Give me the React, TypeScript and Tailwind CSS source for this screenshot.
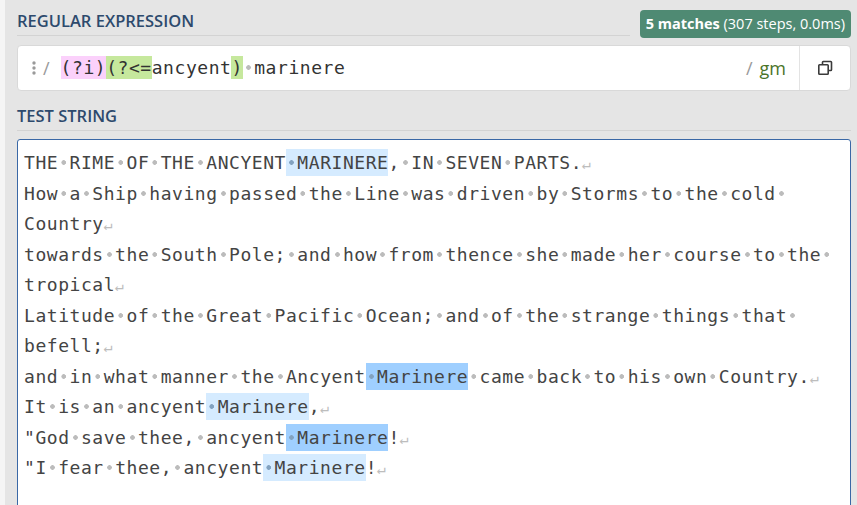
import React from "react";

type Seg = { t: string; h?: "l" | "d" };
type Line = { segs: Seg[]; nl: boolean };

const lines: Line[] = [
  { segs: [{ t: "THE RIME OF THE ANCYENT" }, { t: " MARINERE", h: "l" }, { t: ", IN SEVEN PARTS." }], nl: true },
  { segs: [{ t: "How a Ship having passed the Line was driven by Storms to the cold " }], nl: false },
  { segs: [{ t: "Country" }], nl: true },
  { segs: [{ t: "towards the South Pole; and how from thence she made her course to the " }], nl: false },
  { segs: [{ t: "tropical" }], nl: true },
  { segs: [{ t: "Latitude of the Great Pacific Ocean; and of the strange things that " }], nl: false },
  { segs: [{ t: "befell;" }], nl: true },
  { segs: [{ t: "and in what manner the Ancyent" }, { t: " Marinere", h: "d" }, { t: " came back to his own Country." }], nl: true },
  { segs: [{ t: "It is an ancyent" }, { t: " Marinere", h: "l" }, { t: "," }], nl: true },
  { segs: [{ t: "\"God save thee, ancyent" }, { t: " Marinere", h: "d" }, { t: "!" }], nl: true },
  { segs: [{ t: "\"I fear thee, ancyent" }, { t: " Marinere", h: "l" }, { t: "!" }], nl: true },
];

const DOT = "bg-[radial-gradient(circle,#bcbcbc_2px,transparent_2.6px)] bg-no-repeat bg-center";
const DOT_HL = "bg-[radial-gradient(circle,#82a2c0_2px,transparent_2.6px)] bg-no-repeat bg-center";

function Spaced({ t, hl }: { t: string; hl: boolean }) {
  const parts = t.split(/( )/);
  return (
    <>
      {parts.map((p, i) =>
        p === " " ? (
          <span key={i} className={hl ? DOT_HL : DOT}>
            {" "}
          </span>
        ) : p ? (
          <span key={i}>{p}</span>
        ) : null
      )}
    </>
  );
}

function CopyIcon() {
  return (
    <svg width="16" height="16" viewBox="0 0 16 16" fill="none" stroke="#3a3a3a" strokeWidth="1.6">
      <path d="M5.5 4.5V2.3c0-.5.3-.8.8-.8h7.4c.5 0 .8.3.8.8v7.4c0 .5-.3.8-.8.8h-2.2" />
      <rect x="1.8" y="4.8" width="9.4" height="9.4" rx="0.8" />
    </svg>
  );
}

function Handle() {
  return (
    <svg width="4" height="16" viewBox="0 0 4 16" fill="#9a9a9a">
      <circle cx="2" cy="3" r="1.7" />
      <circle cx="2" cy="8" r="1.7" />
      <circle cx="2" cy="13" r="1.7" />
    </svg>
  );
}

export default function App() {
  return (
    <div className="w-[857px] h-[505px] overflow-hidden bg-[#e5e5e5] flex font-['Open_Sans',sans-serif]">
      <div className="w-[5px] bg-[#f5f5f5] shrink-0" />
      <div className="flex-1 flex flex-col pl-[12px] pr-[6px]">
        {/* header row */}
        <div className="flex items-start h-[38px] shrink-0">
          <div className="flex-1 mr-[10px] pt-[11px] pb-[4px] border-b border-[#d3d3d3] text-[16.5px] leading-[20px] font-semibold text-[#2d4a6d]">
            REGULAR EXPRESSION
          </div>
          <div className="mt-[10px] h-[28px] px-[6px] rounded-[4px] bg-[#4f8a73] text-white text-[14.5px] leading-[28px] whitespace-nowrap">
            <span className="font-bold">5 matches</span> (307 steps, 0.0ms)
          </div>
        </div>

        {/* regex box */}
        <div className="mt-[7px] h-[46px] shrink-0 bg-white border border-[#d9d9d9] rounded-[4px] flex items-center">
          <div className="pl-[14px] flex items-center">
            <Handle />
          </div>
          <span className="ml-[7px] text-[18px] text-[#9a9a9a] leading-[24px]">/</span>
          <div className="ml-[11px] flex-1 font-['DejaVu_Sans_Mono',monospace] text-[18px] tracking-[0.55px] leading-[24px] text-[#333] whitespace-pre">
            <span className="bg-[#fbd1fb] py-[1px]">(?i)</span>
            <span className="bg-[#c6e89d] py-[1px]">(?&lt;=</span>
            <span>ancyent</span>
            <span className="bg-[#c6e89d] py-[1px]">)</span>
            <span className={DOT}> </span>
            <span>marinere</span>
          </div>
          <span className="text-[18px] text-[#9a9a9a] leading-[24px]">/</span>
          <span className="ml-[7px] mr-[13px] text-[18px] text-[#4a7428] leading-[24px]">gm</span>
          <div className="h-full w-[51px] border-l border-[#e3e3e3] flex items-center justify-center">
            <CopyIcon />
          </div>
        </div>

        {/* test string heading */}
        <div className="mt-[15px] pb-[4px] border-b border-[#d3d3d3] text-[16.5px] leading-[20px] font-semibold text-[#2d4a6d] shrink-0">
          TEST STRING
        </div>

        {/* test string box */}
        <div className="mt-[8px] h-[400px] shrink-0 bg-white border border-[#3a68a6] rounded-t-[3px] pl-[6px] pt-[8px] font-['DejaVu_Sans_Mono',monospace] text-[18px] tracking-[0.55px] leading-[30.5px] text-[#444] whitespace-pre">
          {lines.map((ln, i) => (
            <div key={i} className="h-[30.5px]">
              {ln.segs.map((s, j) =>
                s.h ? (
                  <span key={j} className={s.h === "l" ? "bg-[#d5ebff] py-[3px]" : "bg-[#9fcfff] py-[3px]"}>
                    <Spaced t={s.t} hl />
                  </span>
                ) : (
                  <Spaced key={j} t={s.t} hl={false} />
                )
              )}
              {ln.nl && <span className="text-[15px] text-[#bdbdbd] tracking-normal">↵</span>}
            </div>
          ))}
        </div>
      </div>
    </div>
  );
}
